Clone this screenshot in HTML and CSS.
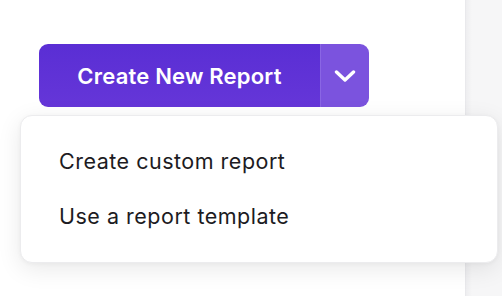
FILE: index.html
```html
<!DOCTYPE html>
<html>
<head>
<meta charset="utf-8">
<link rel="stylesheet" href="styles.css">
</head>
<body>
<div class="page">
  <main class="main">
    <div class="split-button">
      <button class="primary">Create New Report</button>
      <button class="toggle" aria-label="More options">
        <svg width="22" height="12" viewBox="0 0 22 12"><path d="M2.5 2 L11 10 L19.5 2" fill="none" stroke="#fff" stroke-width="3.4" stroke-linecap="round" stroke-linejoin="round"/></svg>
      </button>
    </div>
    <div class="menu">
      <div class="menu-item">Create custom report</div>
      <div class="menu-item">Use a report template</div>
    </div>
  </main>
  <aside class="side"></aside>
</div>
</body>
</html>
```
FILE: styles.css
```css
html, body {
  margin: 0;
  padding: 0;
  background: #fff;
  font-family: Inter, "Open Sans", sans-serif;
}
.page {
  display: flex;
  width: 502px;
  height: 296px;
  overflow: hidden;
}
.main {
  position: relative;
  width: 465px;
  flex: none;
  padding: 44px 0 0 39px;
  box-sizing: border-box;
}
.side {
  flex: 1;
  background: linear-gradient(to right, #eeeef0, #f6f6f7 6px);
  border-left: 1px solid #e9e9ec;
}
.split-button {
  display: flex;
  width: 330px;
  height: 63px;
  border-radius: 9px;
  overflow: hidden;
}
.split-button button {
  border: 0;
  margin: 0;
  padding: 0;
  color: #fff;
  font-family: inherit;
}
.primary {
  width: 281px;
  background: linear-gradient(to bottom, #5a2ed4, #6536d8);
  font-size: 22px;
  font-weight: 600;
  letter-spacing: 0.2px;
}
.toggle {
  flex: 1;
  background: #7b53de;
  border-left: 1px solid #8a66e4 !important;
  display: flex;
  align-items: center;
  justify-content: center;
}
.toggle svg { display: block; margin-top: 1px; }
.menu {
  position: absolute;
  left: 20px;
  top: 115px;
  width: 478px;
  height: 148px;
  box-sizing: border-box;
  padding: 17px 0;
  background: #fff;
  border-radius: 12px;
  border: 1px solid #ececee;
  box-shadow: 0 6px 24px rgba(0, 0, 0, 0.09), 0 1px 4px rgba(0, 0, 0, 0.04);
}
.menu-item {
  height: 55px;
  display: flex;
  align-items: center;
  padding-left: 38px;
  font-size: 21.5px;
  letter-spacing: 0.5px;
  color: #1c1b22;
}
```
